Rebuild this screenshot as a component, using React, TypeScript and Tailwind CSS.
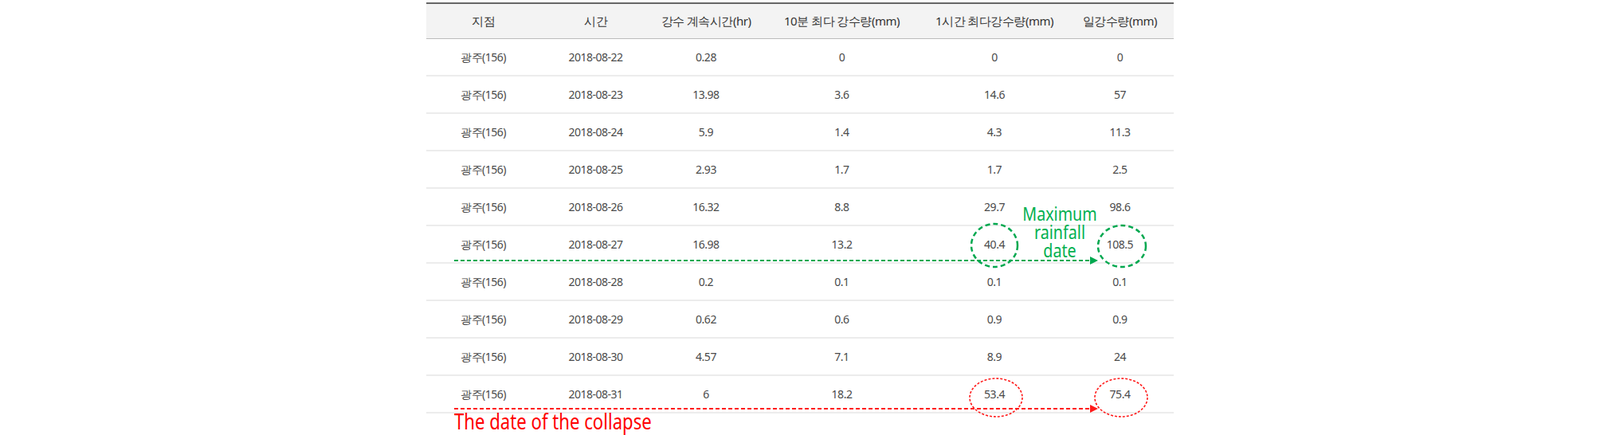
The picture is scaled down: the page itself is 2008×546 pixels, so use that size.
import React from "react";

const cols = [143, 139, 138, 203, 180, 135];
const head = ["지점", "시간", "강수 계속시간(hr)", "10분 최다 강수량(mm)", "1시간 최다강수량(mm)", "일강수량(mm)"];
const rows = [
  ["2018-08-22", "0.28", "0", "0", "0"],
  ["2018-08-23", "13.98", "3.6", "14.6", "57"],
  ["2018-08-24", "5.9", "1.4", "4.3", "11.3"],
  ["2018-08-25", "2.93", "1.7", "1.7", "2.5"],
  ["2018-08-26", "16.32", "8.8", "29.7", "98.6"],
  ["2018-08-27", "16.98", "13.2", "40.4", "108.5"],
  ["2018-08-28", "0.2", "0.1", "0.1", "0.1"],
  ["2018-08-29", "0.62", "0.6", "0.9", "0.9"],
  ["2018-08-30", "4.57", "7.1", "8.9", "24"],
  ["2018-08-31", "6", "18.2", "53.4", "75.4"],
];

export default function App() {
  return (
    <div className="relative w-[2008px] h-[546px] bg-white overflow-hidden font-['Noto_Sans_CJK_KR','Noto_Sans',sans-serif]">
      <div className="ml-[535px] mt-[3px] w-[938px]">
        <div className="flex h-[46px] items-center bg-[#f3f3f3] border-t-2 border-[#666] border-b border-b-[#bbb] text-[15px] text-[#333] tracking-[-0.5px]">
          {head.map((h, i) => (
            <div key={i} style={{ width: cols[i] }} className="text-center">{h}</div>
          ))}
        </div>
        {rows.map((r, ri) => (
          <div key={ri} className="flex h-[47px] items-center border-b-2 border-[#ececec] text-[14px] text-[#4a4a4a] tracking-[-0.5px]">
            {["광주(156)", ...r].map((c, i) => (
              <div key={i} style={{ width: cols[i] }} className="text-center">{c}</div>
            ))}
          </div>
        ))}
      </div>
      <svg className="absolute left-0 top-0" width="2008" height="546">
        <g stroke="#00a84f" strokeWidth="2.5" fill="none" strokeDasharray="6 4">
          <line x1="570" y1="327" x2="1368" y2="327" strokeWidth="2" strokeDasharray="5 3" />
          <ellipse cx="1248" cy="308" rx="29" ry="27" />
          <ellipse cx="1408" cy="309" rx="30" ry="26" />
        </g>
        <polygon points="1368,322 1378,327 1368,332" fill="#00a84f" />
        <g stroke="#ff1a1a" strokeWidth="1.6" fill="none" strokeDasharray="3 2">
          <line x1="570" y1="513" x2="1368" y2="513" strokeWidth="2" strokeDasharray="5 3" />
          <ellipse cx="1250" cy="499" rx="33" ry="24" />
          <ellipse cx="1407" cy="499" rx="33" ry="24" />
        </g>
        <polygon points="1368,508 1378,513 1368,518" fill="#ff1a1a" />
      </svg>
      <div className="absolute left-[1272px] top-[256px] w-[116px] text-center text-[24px] leading-[23px] text-[#00b050] font-['Liberation_Sans',sans-serif] scale-x-[0.82]">
        Maximum<br />rainfall<br />date
      </div>
      <div className="absolute left-[570px] top-[514px] whitespace-nowrap text-[27px] leading-[30px] text-[#ff0000] origin-left font-['Liberation_Sans',sans-serif] scale-x-[0.82]">
        The date of the collapse
      </div>
    </div>
  );
}
